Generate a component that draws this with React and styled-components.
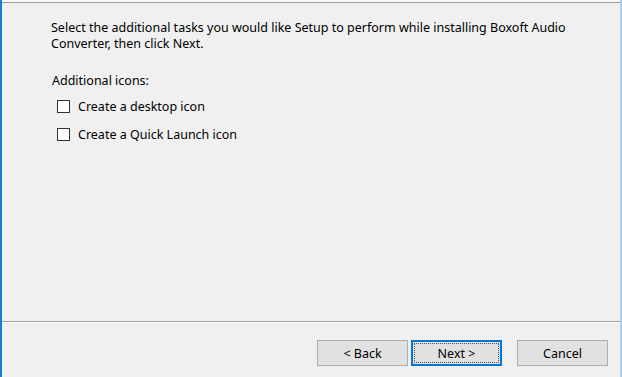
import React from "react"
import styled, { createGlobalStyle } from 'styled-components'

const GlobalStyle = createGlobalStyle`
    html, body {
        margin: 0;
        padding: 0;
        background: #f0f0f0;
    }
`

const Window = styled.div`
    width: 622px;
    height: 377px;
    box-sizing: border-box;
    background: #f0f0f0;
    border-left: 2px solid #1c7bd0;
    border-right: 2px solid #a9d2f2;
    display: flex;
    flex-direction: column;
    font-family: "Noto Sans", "Segoe UI", sans-serif;
    font-size: 12.5px;
    color: #000;
`

const TopEdge = styled.div`
    height: 2px;
    background: #f7f7f7;
    border-bottom: 1px solid #a0a0a0;
`

const Content = styled.div`
    flex: 1;
    padding: 17px 20px 0 49px;
`

const Intro = styled.p`
    margin: 0;
    line-height: 16px;
`

const Group = styled.div`
    margin-top: 21px;
    padding-left: 1px;
`

const GroupLabel = styled.div`
    line-height: 16px;
    margin-bottom: 3px;
`

const CheckRow = styled.label`
    display: flex;
    align-items: center;
    gap: 8px;
    height: 28px;
    padding-left: 5px;
`

const Box = styled.span`
    width: 11px;
    height: 11px;
    border: 1px solid #333;
    background: #fff;
    flex: none;
`

const Separator = styled.div`
    height: 0;
    border-top: 1px solid #a0a0a0;
    border-bottom: 1px solid #fff;
`

const ButtonBar = styled.div`
    height: 54px;
    display: flex;
    justify-content: flex-end;
    align-items: flex-start;
    padding: 17px 12px 0 0;
    box-sizing: border-box;
`

const Button = styled.button`
    width: 91px;
    height: 26px;
    box-sizing: border-box;
    margin-left: ${p => p.$gap || 0}px;
    background: #e1e1e1;
    border: ${p => p.$focused ? '2px solid #0078d7' : '1px solid #adadad'};
    font-family: inherit;
    font-size: 12.5px;
    color: #000;
    padding: 0;
    position: relative;
`

const FocusRing = styled.span`
    position: absolute;
    inset: 1px;
    border: 1px dotted #555;
`

export default class App extends React.Component {
    render(){
        return (
            <Window>
                <GlobalStyle/>
                <TopEdge/>
                <Content>
                    <Intro>
                        Select the additional tasks you would like Setup to perform while installing Boxoft Audio
                        <br/>
                        Converter, then click Next.
                    </Intro>
                    <Group>
                        <GroupLabel>Additional icons:</GroupLabel>
                        <CheckRow><Box/>Create a desktop icon</CheckRow>
                        <CheckRow><Box/>Create a Quick Launch icon</CheckRow>
                    </Group>
                </Content>
                <Separator/>
                <ButtonBar>
                    <Button>&lt; Back</Button>
                    <Button $gap={3} $focused>Next &gt;<FocusRing/></Button>
                    <Button $gap={15}>Cancel</Button>
                </ButtonBar>
            </Window>
        )
    }
}
